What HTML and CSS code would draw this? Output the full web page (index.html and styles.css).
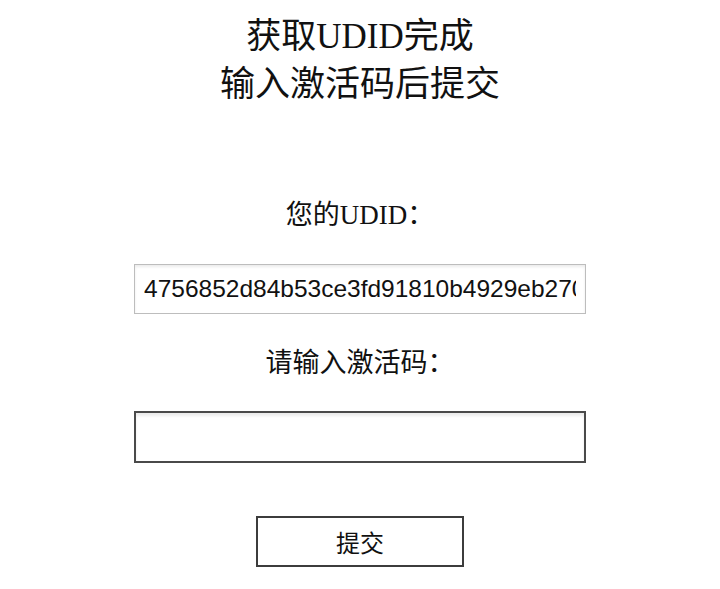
FILE: index.html
```html
<!DOCTYPE html>
<html lang="zh-CN">
<head>
<meta charset="utf-8">
<title>获取UDID完成</title>
<link rel="stylesheet" href="styles.css">
</head>
<body>
<main class="page">
  <h1 class="title">获取UDID完成<br>输入激活码后提交</h1>
  <p class="label label-udid">您的UDID：</p>
  <input class="field field-udid" type="text" value="4756852d84b53ce3fd91810b4929eb2700a1c3e5" readonly>
  <p class="label label-code">请输入激活码：</p>
  <input class="field field-code" type="text">
  <button class="submit" type="button">提交</button>
</main>
</body>
</html>
```

FILE: styles.css
```css
html, body {
  margin: 0;
  padding: 0;
  background: #fff;
}

body {
  font-family: "Liberation Serif", "Noto Sans CJK SC", serif;
  color: #111;
}

.page {
  display: flex;
  flex-direction: column;
  align-items: center;
  padding-top: 13px;
}

.title {
  margin: 0;
  font-size: 35px;
  line-height: 48px;
  font-weight: 400;
  text-align: center;
}

.label {
  margin: 0;
  font-size: 27px;
  line-height: 36px;
  text-align: center;
}

.label-udid {
  margin-top: 88px;
}

.label-code {
  margin-top: 31px;
}

.field {
  box-sizing: border-box;
  width: 452px;
  height: 50px;
  margin: 31px 0 0;
  padding: 0 9px;
  background: #fff;
  font-family: "Liberation Sans", "Noto Sans CJK SC", sans-serif;
  font-size: 24.5px;
  color: #111;
  outline: none;
  border-radius: 0;
}

.field-udid {
  border: 1px solid #bdbdbd;
  box-shadow: inset 0 2px 3px rgba(0, 0, 0, 0.08);
}

.field-code {
  height: 52px;
  margin-top: 30px;
  border: 2px solid #4a4a4a;
  box-shadow: inset 0 3px 3px rgba(0, 0, 0, 0.08);
}

.submit {
  box-sizing: border-box;
  width: 208px;
  height: 51px;
  margin-top: 53px;
  padding: 0;
  background: #fff;
  border: 2px solid #3c3c3c;
  border-radius: 0;
  font-family: "Liberation Serif", "Noto Sans CJK SC", serif;
  font-size: 24px;
  color: #111;
}
```
